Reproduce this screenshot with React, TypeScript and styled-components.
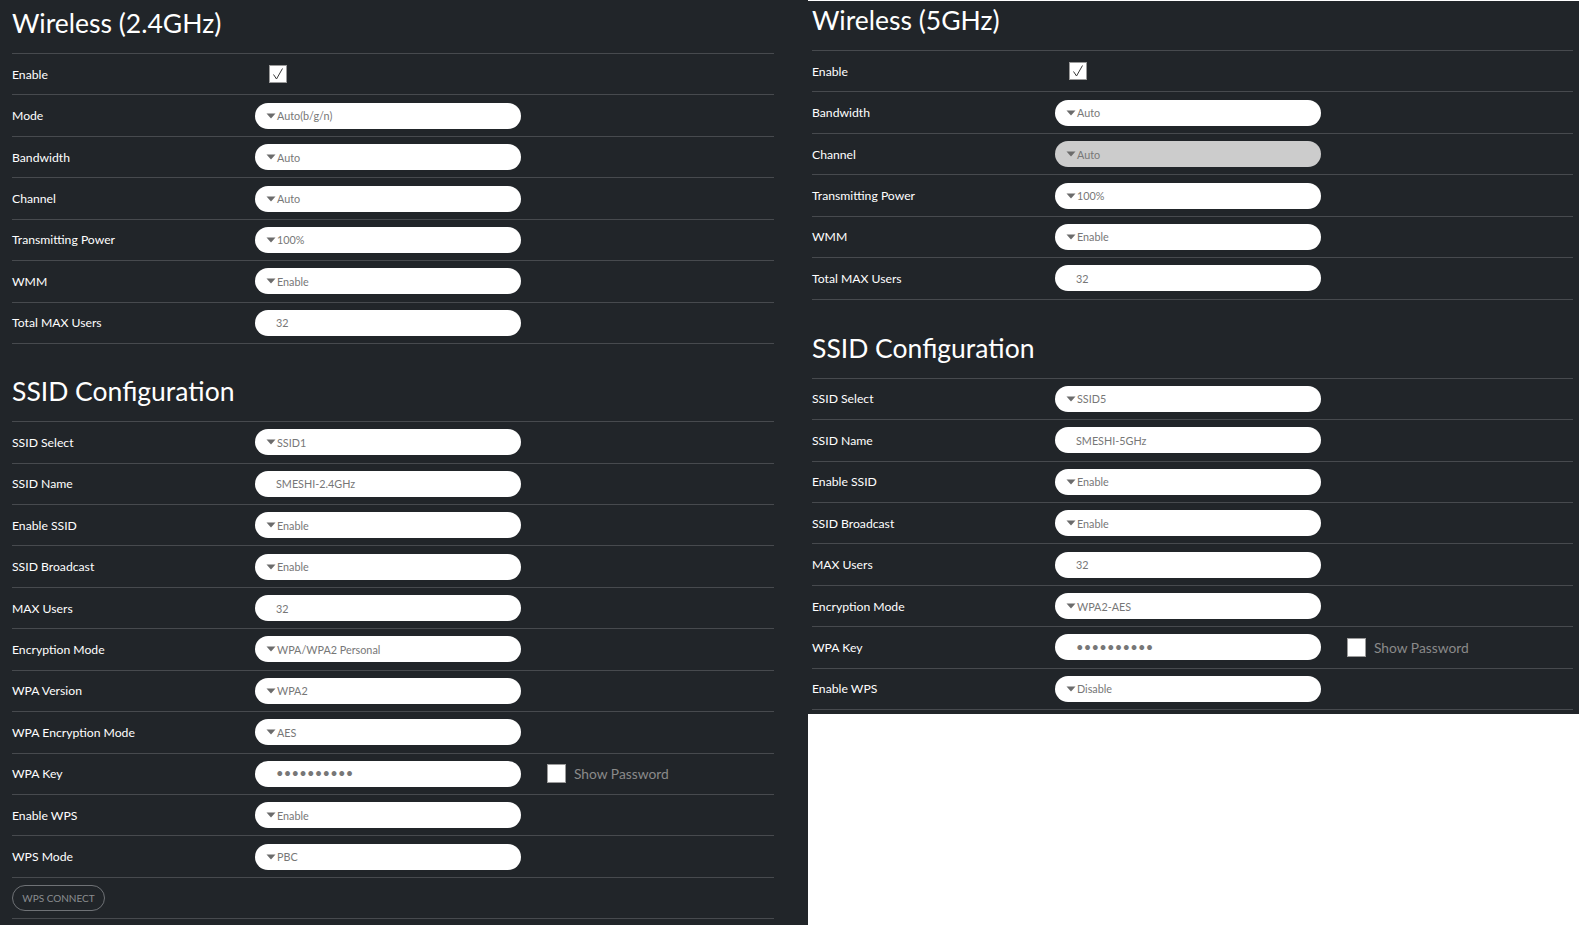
import React from "react";
import styled, { createGlobalStyle } from "styled-components";

const GlobalStyle = createGlobalStyle`
  html, body { margin: 0; padding: 0; background: #ffffff; }
  body { font-family: "Lato", "Open Sans", sans-serif; }
  * { box-sizing: border-box; }
`;

const BG = "#212529";
const LINE = "#474a4e";

const Page = styled.div`
  display: flex;
  align-items: flex-start;
  width: 1579px;
`;

const Panel = styled.section<{ $side: "left" | "right" }>`
  background: ${BG};
  ${(p) =>
    p.$side === "left"
      ? `width: 808px; min-height: 925px; padding: 0 34px 0 12px;`
      : `flex: 1; margin-top: 1px; padding: 0 6px 4px 4px;`}
`;

const Heading = styled.h2<{ $h: number }>`
  margin: 0;
  height: ${(p) => p.$h}px;
  display: flex;
  align-items: flex-end;
  padding-bottom: 13px;
  color: #ffffff;
  font-family: "Lato", sans-serif;
  font-weight: 400;
  font-size: 26.5px;
  line-height: 34px;
`;

const Table = styled.div`
  border-top: 1px solid ${LINE};
`;

const Row = styled.div`
  display: flex;
  align-items: center;
  height: 41.45px;
  border-bottom: 1px solid ${LINE};
`;

const Label = styled.div`
  width: 243px;
  flex: none;
  color: #ffffff;
  font-family: "Lato", sans-serif;
  font-size: 12.2px;
  font-weight: 400;
`;

const Pill = styled.div<{ $disabled?: boolean; $pad: number }>`
  width: 266px;
  height: 26px;
  border-radius: 13px;
  background: ${(p) => (p.$disabled ? "#cccccc" : "#ffffff")};
  display: flex;
  align-items: center;
  padding-left: ${(p) => p.$pad}px;
  color: #777777;
  font-family: "Lato", sans-serif;
  font-size: 10.8px;
  flex: none;
`;

const Caret = styled.svg`
  width: 10px;
  height: 6px;
  margin-right: 1px;
  flex: none;
`;

const Dots = styled.span`
  color: #777777;
  font-size: 13px;
  letter-spacing: 0.2px;
  line-height: 1;
`;

const CheckBox = styled.div<{ $size: number; $offset: number }>`
  width: ${(p) => p.$size}px;
  height: ${(p) => p.$size}px;
  margin-left: ${(p) => p.$offset}px;
  background: #ffffff;
  border: 1px solid #9a9a9a;
  display: flex;
  align-items: center;
  justify-content: center;
  flex: none;
`;

const ShowPw = styled.span`
  margin-left: 8px;
  color: #8a8a8a;
  font-family: "Lato", sans-serif;
  font-size: 13.8px;
`;

const GhostButton = styled.button`
  height: 26px;
  width: 93px;
  border: 1px solid #6f7276;
  border-radius: 13px;
  background: transparent;
  color: #8a8d90;
  font-family: "Lato", sans-serif;
  font-size: 10px;
  padding: 0;
  text-transform: uppercase;
`;

type Field =
  | { kind: "select"; value: string; disabled?: boolean }
  | { kind: "text"; value: string }
  | { kind: "password" }
  | { kind: "check" };

type RowDef = { label: string; field: Field };

const CaretIcon = () => (
  <Caret viewBox="0 0 10 6">
    <path d="M0.5 0.5 L9.5 0.5 L5 5.5 Z" fill="#6b6b6b" />
  </Caret>
);

const FieldView: React.FC<{ field: Field }> = ({ field }) => {
  switch (field.kind) {
    case "select":
      return (
        <Pill $pad={11} $disabled={field.disabled}>
          <CaretIcon />
          {field.value}
        </Pill>
      );
    case "text":
      return <Pill $pad={21}>{field.value}</Pill>;
    case "password":
      return (
        <>
          <Pill $pad={21}>
            <Dots>••••••••••</Dots>
          </Pill>
          <CheckBox $size={19} $offset={26} />
          <ShowPw>Show Password</ShowPw>
        </>
      );
    case "check":
      return (
        <CheckBox $size={18} $offset={14}>
          <svg width="14" height="14" viewBox="0 0 14 14">
            <path d="M2.5 7.5 L5.5 12 L11.5 1.5" fill="none" stroke="#3a3a3a" strokeWidth="1" />
          </svg>
        </CheckBox>
      );
  }
};

const Rows: React.FC<{ rows: RowDef[]; children?: React.ReactNode }> = ({ rows, children }) => (
  <Table>
    {rows.map((r) => (
      <Row key={r.label}>
        <Label>{r.label}</Label>
        <FieldView field={r.field} />
      </Row>
    ))}
    {children}
  </Table>
);

const sel = (value: string, disabled?: boolean): Field => ({ kind: "select", value, disabled });
const txt = (value: string): Field => ({ kind: "text", value });

const left1: RowDef[] = [
  { label: "Enable", field: { kind: "check" } },
  { label: "Mode", field: sel("Auto(b/g/n)") },
  { label: "Bandwidth", field: sel("Auto") },
  { label: "Channel", field: sel("Auto") },
  { label: "Transmitting Power", field: sel("100%") },
  { label: "WMM", field: sel("Enable") },
  { label: "Total MAX Users", field: txt("32") },
];

const left2: RowDef[] = [
  { label: "SSID Select", field: sel("SSID1") },
  { label: "SSID Name", field: txt("SMESHI-2.4GHz") },
  { label: "Enable SSID", field: sel("Enable") },
  { label: "SSID Broadcast", field: sel("Enable") },
  { label: "MAX Users", field: txt("32") },
  { label: "Encryption Mode", field: sel("WPA/WPA2 Personal") },
  { label: "WPA Version", field: sel("WPA2") },
  { label: "WPA Encryption Mode", field: sel("AES") },
  { label: "WPA Key", field: { kind: "password" } },
  { label: "Enable WPS", field: sel("Enable") },
  { label: "WPS Mode", field: sel("PBC") },
];

const right1: RowDef[] = [
  { label: "Enable", field: { kind: "check" } },
  { label: "Bandwidth", field: sel("Auto") },
  { label: "Channel", field: sel("Auto", true) },
  { label: "Transmitting Power", field: sel("100%") },
  { label: "WMM", field: sel("Enable") },
  { label: "Total MAX Users", field: txt("32") },
];

const right2: RowDef[] = [
  { label: "SSID Select", field: sel("SSID5") },
  { label: "SSID Name", field: txt("SMESHI-5GHz") },
  { label: "Enable SSID", field: sel("Enable") },
  { label: "SSID Broadcast", field: sel("Enable") },
  { label: "MAX Users", field: txt("32") },
  { label: "Encryption Mode", field: sel("WPA2-AES") },
  { label: "WPA Key", field: { kind: "password" } },
  { label: "Enable WPS", field: sel("Disable") },
];

export default function App() {
  return (
    <>
      <GlobalStyle />
      <Page>
        <Panel $side="left">
          <Heading $h={53}>Wireless (2.4GHz)</Heading>
          <Rows rows={left1} />
          <Heading $h={77}>SSID Configuration</Heading>
          <Rows rows={left2}>
            <Row>
              <GhostButton>WPS Connect</GhostButton>
            </Row>
          </Rows>
        </Panel>
        <Panel $side="right">
          <Heading $h={49}>Wireless (5GHz)</Heading>
          <Rows rows={right1} />
          <Heading $h={78}>SSID Configuration</Heading>
          <Rows rows={right2} />
        </Panel>
      </Page>
    </>
  );
}
